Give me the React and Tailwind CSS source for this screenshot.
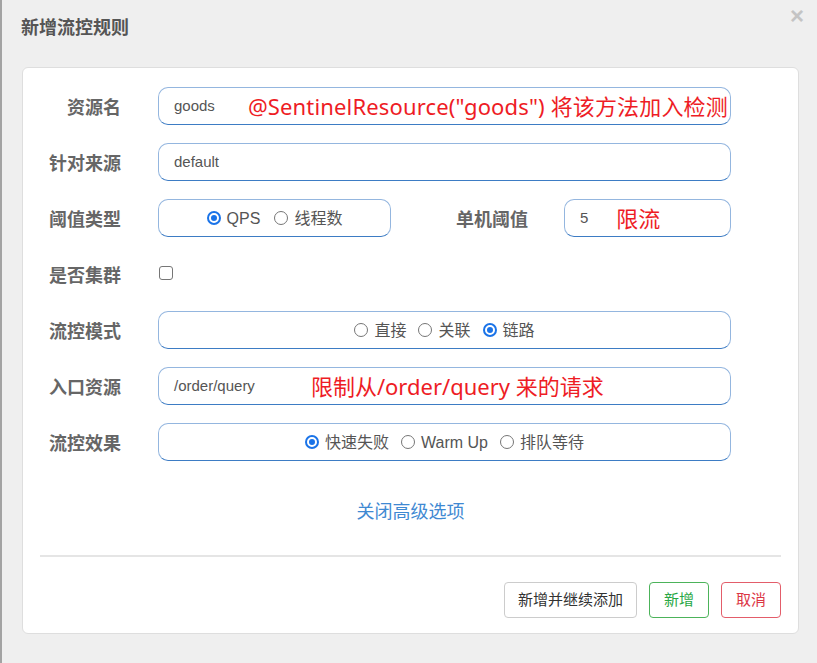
const cjk = "font-['Liberation_Sans','Noto_Sans_CJK_SC',sans-serif]";
const note = "font-['Noto_Sans','Noto_Sans_CJK_SC',sans-serif]";

function Radio({ checked, label }) {
  return (
    <label className="flex items-center gap-[6px] text-[16px] text-[#555]">
      {checked ? (
        <span className="w-[14px] h-[14px] rounded-full bg-[#1a73e8] flex items-center justify-center">
          <span className="w-[10px] h-[10px] rounded-full border-2 border-white bg-[#1a73e8]" />
        </span>
      ) : (
        <span className="w-[14px] h-[14px] rounded-full border border-[#767676] bg-white" />
      )}
      <span className="pt-[2px]">{label}</span>
    </label>
  );
}

function Box({ className = "", children }) {
  return (
    <div
      className={`h-[38px] flex items-center rounded-[10px] border border-[#94b6df] border-b-[#3d7cc4] ${className}`}
    >
      {children}
    </div>
  );
}

function Row({ label, children }) {
  return (
    <div className="flex items-center h-[38px] mb-[18px]">
      <div className="w-[98px] pt-[5px] text-right text-[18px] font-bold text-[#666] shrink-0">{label}</div>
      <div className="ml-[37px] flex items-center">{children}</div>
    </div>
  );
}

export default function App() {
  return (
    <div className={`w-[817px] h-[663px] bg-[#efefef] border-l-2 border-[#a3a3a3] overflow-hidden ${cjk}`}>
      <div className="flex items-start justify-between pl-[19px] pr-[13px] pt-[15px] h-[67px]">
        <h4 className="text-[18px] font-bold text-[#555] leading-[26px]">新增流控规则</h4>
        <span className="text-[24px] leading-none font-bold text-[#c4c4c4] -mt-[11px]">×</span>
      </div>

      <div className="ml-[20px] w-[777px] h-[567px] bg-white border border-[#dedede] rounded-md pt-[19px]">
        <Row label="资源名">
          <Box className="w-[573px] pl-[15px]">
            <span className="text-[15px] text-[#555]">goods</span>
            <span className={`ml-[33px] text-[22px] tracking-[0.15px] text-[#ee1c25] whitespace-nowrap ${note}`}>
              @SentinelResource("goods") 将该方法加入检测
            </span>
          </Box>
        </Row>

        <Row label="针对来源">
          <Box className="w-[573px] pl-[15px]">
            <span className="text-[15px] text-[#555]">default</span>
          </Box>
        </Row>

        <Row label="阈值类型">
          <Box className="w-[233px] justify-center gap-[14px]">
            <Radio checked label="QPS" />
            <Radio label="线程数" />
          </Box>
          <div className="w-[137px] pt-[5px] text-right text-[18px] font-bold text-[#666]">单机阈值</div>
          <Box className="ml-[36px] w-[167px] pl-[15px]">
            <span className="text-[15px] text-[#555]">5</span>
            <span className={`ml-[28px] text-[22px] text-[#ee1c25] ${note}`}>限流</span>
          </Box>
        </Row>

        <Row label="是否集群">
          <span className="ml-[1px] -mt-[2px] w-[14px] h-[14px] rounded-[3px] border border-[#767676] bg-white" />
        </Row>

        <Row label="流控模式">
          <Box className="w-[573px] justify-center gap-[12px]">
            <Radio label="直接" />
            <Radio label="关联" />
            <Radio checked label="链路" />
          </Box>
        </Row>

        <Row label="入口资源">
          <Box className="w-[573px] pl-[15px]">
            <span className="text-[15px] text-[#555]">/order/query</span>
            <span className={`ml-[56px] text-[22px] text-[#ee1c25] whitespace-nowrap ${note}`}>
              限制从/order/query 来的请求
            </span>
          </Box>
        </Row>

        <Row label="流控效果">
          <Box className="w-[573px] justify-center gap-[12px]">
            <Radio checked label="快速失败" />
            <Radio label="Warm Up" />
            <Radio label="排队等待" />
          </Box>
        </Row>

        <div className="mt-[38px] text-center text-[18px] leading-[26px] text-[#3f89d2]">关闭高级选项</div>

        <div className="mx-[17px] mt-[30px] h-[2px] bg-[#e5e5e5]" />

        <div className="flex justify-end gap-[12px] pr-[17px] mt-[25px]">
          <button className="h-[36px] px-[13px] rounded border border-[#cccccc] bg-white text-[15px] text-[#333]">
            新增并继续添加
          </button>
          <button className="h-[36px] w-[60px] rounded border border-[#4cb35a] bg-white text-[15px] text-[#28a745]">
            新增
          </button>
          <button className="h-[36px] w-[60px] rounded border border-[#e35d6a] bg-white text-[15px] text-[#dc3545]">
            取消
          </button>
        </div>
      </div>
    </div>
  );
}
